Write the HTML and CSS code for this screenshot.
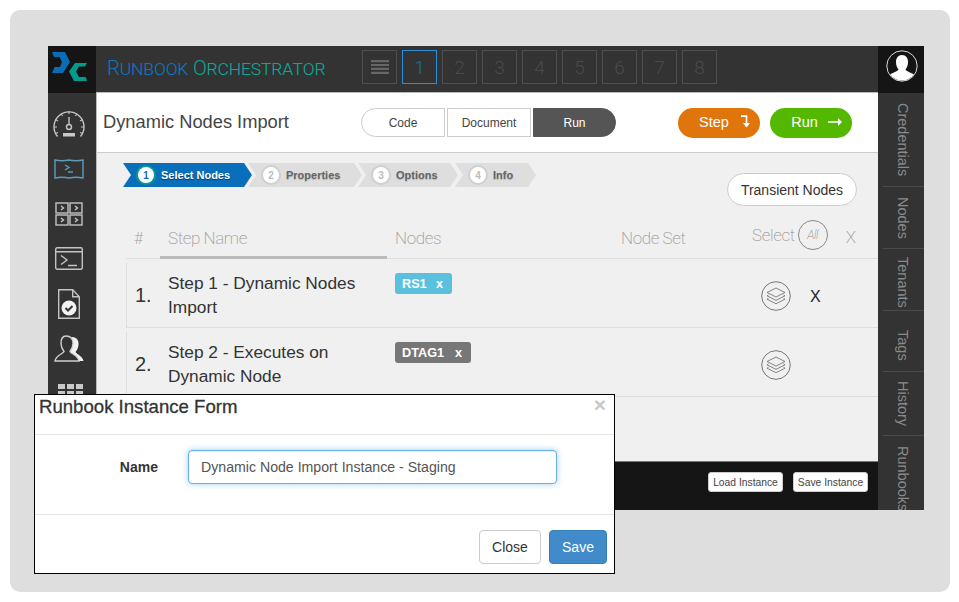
FILE: index.html
```html
<!DOCTYPE html>
<html lang="en">
<head>
<meta charset="utf-8">
<title>Runbook Orchestrator</title>
<link rel="stylesheet" href="styles.css">
</head>
<body>
<div class="frame">
  <div class="app">
    <aside class="rail">
      <div class="logo">
        <svg class="logo-svg" viewBox="0 0 47 46">
          <polygon class="logo-blue" points="4,6 17,6 22,16 15,27 4,27 6.5,21 12,21 14,16 11.5,11 6,11"/>
          <polygon class="logo-teal" points="39,17 27,17 21,25.500 26,35 39,35 37.700,31 31,31 28,25.500 31,20.500 37,20.500"/>
        </svg>
      </div>
      <nav class="rail-icons">
        <div class="rail-cell">
          <svg class="ico-gauge" viewBox="0 0 32 28">
            <path class="ln" d="M4.500 26.500A15 15 0 1 1 27.500 26.500"/>
            <path class="ln-thin" d="M16 1v3M8 3.500l1.500 2.500M24 3.500L22.500 6M2.500 9.500l2.500 1.500M29.500 9.500L27 11M1 17h3M31 17h-3M2.500 23.500l2.500-1M29.500 23.500l-2.500-1"/>
            <path class="ln" d="M16 7v7"/>
            <circle class="ln" cx="16" cy="17" r="2.500"/>
            <rect class="fill-soft" x="10" y="23" width="12" height="3.500"/>
          </svg>
        </div>
        <div class="rail-cell">
          <svg class="ico-book" viewBox="0 0 30 22">
            <path class="ln-blue" d="M1 2c5 1 9 1 14 0c5 1 9 1 14 0v18c-5-1-9-1-14 0c-5-1-9-1-14 0z"/>
            <path class="ln-blue" d="M11 7l4 2.500l-4 2.500M14 14h5"/>
          </svg>
        </div>
        <div class="rail-cell">
          <svg class="ico-panels" viewBox="0 0 28 24">
            <rect class="ln" x="1" y="1" width="12" height="10"/>
            <rect class="ln" x="15" y="1" width="12" height="10"/>
            <rect class="ln" x="1" y="13" width="12" height="10"/>
            <rect class="ln" x="15" y="13" width="12" height="10"/>
            <path class="ln" d="M6 4l2.500 2l-2.500 2M20 4l2.500 2l-2.500 2M6 16l2.500 2l-2.500 2M20 16l2.500 2l-2.500 2"/>
          </svg>
        </div>
        <div class="rail-cell">
          <svg class="ico-term" viewBox="0 0 28 23">
            <rect class="ln" x="0.700" y="0.700" width="26.600" height="21.600" rx="1.500"/>
            <path class="ln" d="M0.700 4.700h26.600M6 8.500l6 4.500l-6 4.500M13 18.500h9"/>
          </svg>
        </div>
        <div class="rail-cell">
          <svg class="ico-doc" viewBox="0 0 22 30">
            <path class="ln" d="M0.700 0.700h14l6.600 7v21.600h-20.600z"/>
            <path class="ln" d="M14.700 0.700v7h6.600"/>
            <circle class="fill-white" cx="11" cy="19" r="7.500"/>
            <path class="ln-dark" d="M7.500 19l2.500 2.500l4.500-4.500"/>
          </svg>
        </div>
        <div class="rail-cell">
          <svg class="ico-user" viewBox="0 0 30 27">
            <path class="fill-white" d="M18 2c5 0 7 4 6.500 8c-.3 3-1.500 5-3 7c2 3 7 4 8 9h-7c-1-3-4-4-6-6z"/>
            <path class="ln-fill" d="M12 1c4.500 0 7 3 7 7.500c0 3.500-1.500 6-3 8c1 2.500 8 3.500 9 9.500H1c1-6 8-7 9-9.500c-1.500-2-3-4.500-3-8C7 4 8.500 1 12 1z"/>
          </svg>
        </div>
        <div class="rail-cell">
          <svg class="ico-apps" viewBox="0 0 25 24">
            <rect class="fill-soft" x="0" y="0" width="7" height="5"/>
            <rect class="fill-soft" x="9" y="0" width="7" height="5"/>
            <rect class="fill-soft" x="18" y="0" width="7" height="5"/>
            <rect class="fill-soft" x="0" y="7" width="7" height="5"/>
            <rect class="fill-soft" x="9" y="7" width="7" height="5"/>
            <rect class="fill-soft" x="18" y="7" width="7" height="5"/>
          </svg>
        </div>
      </nav>
    </aside>

    <div class="center">
      <header class="topbar">
        <div class="brand"><span class="brand-blue">Runbook</span> <span class="brand-teal">Orchestrator</span></div>
        <div class="slots">
          <div class="slot">
            <svg class="ico-menu" viewBox="0 0 18 14"><path d="M0 0h18v2.200H0zM0 3.900h18v2.200H0zM0 7.800h18V10H0zM0 11.700h18v2.200H0z"/></svg>
          </div>
          <div class="slot slot-active">1</div>
          <div class="slot">2</div>
          <div class="slot">3</div>
          <div class="slot">4</div>
          <div class="slot">5</div>
          <div class="slot">6</div>
          <div class="slot">7</div>
          <div class="slot">8</div>
        </div>
      </header>

      <section class="titlebar">
        <h1 class="page-title">Dynamic Nodes Import</h1>
        <div class="segments">
          <button class="seg seg-first">Code</button>
          <button class="seg">Document</button>
          <button class="seg seg-last">Run</button>
        </div>
        <div class="actions">
          <button class="pill pill-step">Step
            <svg class="ico-step" viewBox="0 0 10 13"><path class="step-line" d="M1 1.200h5.500v8"/><path class="step-head" d="M3 8h7l-3.500 4.500z"/></svg>
          </button>
          <button class="pill pill-run">Run
            <svg class="ico-arrow" viewBox="0 0 14 8"><path d="M0 3.200h10V0l4 4l-4 4V4.800H0z"/></svg>
          </button>
        </div>
      </section>

      <main class="main">
        <div class="toolbar">
          <ol class="steps">
            <li class="step step-active"><span class="num">1</span>Select Nodes</li>
            <li class="step step-2"><span class="num">2</span>Properties</li>
            <li class="step step-3"><span class="num">3</span>Options</li>
            <li class="step step-4"><span class="num">4</span>Info</li>
          </ol>
          <button class="transient">Transient Nodes</button>
        </div>

        <div class="table">
          <div class="thead">
            <div class="th">#</div>
            <div class="th th-name">Step Name</div>
            <div class="th">Nodes</div>
            <div class="th">Node Set</div>
            <div class="th th-select">
              <span>Select</span>
              <span class="all">All</span>
              <span class="th-x">X</span>
            </div>
          </div>
          <div class="row">
            <div class="idx">1.</div>
            <div class="name">Step 1 - Dynamic Nodes Import</div>
            <div class="nodes"><span class="tag tag-blue">RS1<span class="tag-x">x</span></span></div>
            <div class="nodeset"></div>
            <div class="sel">
              <svg class="ico-layers" viewBox="0 0 30 30">
                <circle class="lay-c" cx="15" cy="15" r="14.300"/>
                <path class="lay" d="M15 7l9 4.500l-9 4.500l-9-4.500z"/>
                <path class="lay" d="M7.500 13.800L6 14.800l9 4.500l9-4.500l-1.500-1"/>
                <path class="lay" d="M7.500 17.200L6 18.200l9 4.500l9-4.500l-1.500-1"/>
              </svg>
              <span class="row-x">X</span>
            </div>
          </div>
          <div class="row">
            <div class="idx">2.</div>
            <div class="name">Step 2 - Executes on Dynamic Node</div>
            <div class="nodes"><span class="tag tag-gray">DTAG1<span class="tag-x">x</span></span></div>
            <div class="nodeset"></div>
            <div class="sel">
              <svg class="ico-layers" viewBox="0 0 30 30">
                <circle class="lay-c" cx="15" cy="15" r="14.300"/>
                <path class="lay" d="M15 7l9 4.500l-9 4.500l-9-4.500z"/>
                <path class="lay" d="M7.500 13.800L6 14.800l9 4.500l9-4.500l-1.500-1"/>
                <path class="lay" d="M7.500 17.200L6 18.200l9 4.500l9-4.500l-1.500-1"/>
              </svg>
            </div>
          </div>
        </div>
      </main>

      <footer class="footer">
        <button class="foot-btn">Load Instance</button>
        <button class="foot-btn">Save Instance</button>
      </footer>
    </div>

    <aside class="side">
      <div class="avatar">
        <svg class="ico-avatar" viewBox="0 0 32 32">
          <clipPath id="avatar-clip"><circle cx="16" cy="16" r="14.500"/></clipPath>
          <circle class="av-ring" cx="16" cy="16" r="15.200"/>
          <path class="av-bust" clip-path="url(#avatar-clip)" d="M16 5c4 0 6 3 6 7c0 3-1 5.500-2.500 7.500c.3 2 7 3 10 6.500v6H2.500v-6c3-3.500 9.700-4.500 10-6.500C11 17.500 10 15 10 12c0-4 2-7 6-7z"/>
        </svg>
      </div>
      <div class="tab tab-1"><span>Credentials</span></div>
      <div class="tab tab-2"><span>Nodes</span></div>
      <div class="tab tab-3"><span>Tenants</span></div>
      <div class="tab tab-4"><span>Tags</span></div>
      <div class="tab tab-5"><span>History</span></div>
      <div class="tab tab-6"><span>Runbooks</span></div>
    </aside>
  </div>
</div>

<div class="modal">
  <div class="modal-head">
    <h2 class="modal-title">Runbook Instance Form</h2>
    <span class="modal-close">×</span>
  </div>
  <div class="modal-body">
    <label class="modal-label" for="instance-name">Name</label>
    <input class="modal-input" id="instance-name" type="text" value="Dynamic Node Import Instance - Staging">
  </div>
  <div class="modal-foot">
    <button class="btn btn-close">Close</button>
    <button class="btn btn-save">Save</button>
  </div>
</div>
</body>
</html>
```
FILE: styles.css
```css
* { box-sizing: border-box; }
html, body { margin: 0; padding: 0; }
body {
  width: 959px;
  height: 602px;
  background: #fff;
  font-family: "Liberation Sans", Arial, sans-serif;
  color: #333;
  overflow: hidden;
  position: relative;
}
button { font-family: inherit; cursor: pointer; }

.frame {
  margin: 10px 9px 10px 10px;
  width: 940px;
  height: 582px;
  background: #dedede;
  border-radius: 10px;
  padding: 36px 26px 82px 38px;
}
.app {
  display: flex;
  width: 876px;
  height: 464px;
  background: #333;
}

/* left rail */
.rail { width: 48px; flex: none; background: #333; overflow: hidden; }
.logo { height: 47px; background: #151515; }
.logo-svg { display: block; width: 47px; height: 46px; }
.logo-blue { fill: #0a6cb4; }
.logo-teal { fill: #069a8c; }
.rail-icons { padding-top: 8px; height: 417px; overflow: hidden; }
.rail-cell {
  height: 45px;
  display: flex;
  align-items: center;
  justify-content: center;
  padding-right: 6px;
}
.ln { fill: none; stroke: #c4c4c4; stroke-width: 1.400; }
.ln-thin { fill: none; stroke: #c4c4c4; stroke-width: 1.100; }
.ln-blue { fill: none; stroke: #5d9cb8; stroke-width: 1.400; }
.ln-dark { fill: none; stroke: #333; stroke-width: 2; }
.ln-fill { fill: #333; stroke: #d0d0d0; stroke-width: 1.400; }
.fill-white { fill: #f2f2f2; }
.fill-soft { fill: #c8c8c8; }
.ico-gauge { width: 32px; height: 28px; }
.ico-book { width: 30px; height: 22px; }
.ico-panels { width: 28px; height: 24px; }
.ico-term { width: 28px; height: 23px; }
.ico-doc { width: 22px; height: 30px; }
.ico-user { width: 30px; height: 27px; }
.ico-apps { width: 25px; height: 24px; margin-top: 4px; margin-left: 2px; }

/* centre column */
.center { flex: 1; min-width: 0; display: flex; flex-direction: column; }
.topbar {
  height: 46px;
  flex: none;
  background: #333;
  display: flex;
  align-items: center;
  padding-left: 11px;
}
.brand {
  width: 255px;
  font-size: 20.400px;
  font-family: "Roboto", "Liberation Sans", sans-serif;
  font-weight: 300;
  font-variant: small-caps;
  white-space: nowrap;
  letter-spacing: -0.2px;
  margin-top: -2px;
}
.brand-blue { color: #0d74c0; }
.brand-teal { color: #0ba798; }
.slots { display: flex; gap: 5px; margin-top: -4px; }
.slot {
  width: 35px;
  height: 34px;
  border: 1px solid #4f4f4f;
  color: #4a4a4a;
  font-size: 19px;
  font-weight: 300;
  font-family: "Roboto", "Liberation Sans", sans-serif;
  display: flex;
  align-items: center;
  justify-content: center;
}
.slot-active { border-color: #2b8fd6; color: #1f6da6; }
.ico-menu { width: 18px; height: 14px; fill: #666; }

.titlebar {
  height: 61px;
  flex: none;
  background: #fff;
  border-bottom: 1px solid #ccc;
  border-top: 1px solid #bbb;
  border-left: 1px solid #bbb;
  display: flex;
  align-items: center;
  padding-left: 6px;
}
.page-title {
  margin: 0 0 1px;
  width: 258px;
  font-size: 18.300px;
  font-weight: 400;
  color: #444;
  white-space: nowrap;
}
.segments { display: flex; gap: 2px; }
.seg {
  width: 84px;
  height: 29px;
  padding: 0;
  background: #fff;
  border: 1px solid #ccc;
  font-size: 12px;
  color: #444;
}
.seg-first { border-radius: 15px 0 0 15px; }
.seg-last {
  width: 83px;
  background: #555;
  border-color: #555;
  color: #fff;
  border-radius: 0 15px 15px 0;
}
.actions { display: flex; gap: 10px; margin-left: 62px; }
.pill {
  width: 82px;
  height: 30px;
  padding: 0 0 2px 9px;
  border: 0;
  border-radius: 15px;
  color: #fff;
  font-size: 14.500px;
  display: flex;
  align-items: center;
  justify-content: center;
  gap: 11px;
}
.pill-step { background: #e0760b; padding-left: 11px; }
.pill-run { background: #55b800; padding-left: 11px; gap: 10px; }
.ico-step { width: 10px; height: 13px; }
.step-line { fill: none; stroke: #fff; stroke-width: 1.700; }
.step-head { fill: #fff; }
.ico-arrow { width: 14px; height: 8px; fill: #fff; }

/* main */
.main {
  flex: 1;
  min-height: 0;
  background: #f0f0f0;
  border-left: 1px solid #bbb;
  padding-top: 10px;
}
.toolbar {
  height: 57px;
  display: flex;
  justify-content: space-between;
  align-items: flex-start;
  padding: 0 21px 0 26px;
}
.steps { display: flex; list-style: none; margin: 0; padding: 0; }
.step {
  height: 24px;
  display: flex;
  align-items: center;
  font-size: 11px;
  font-weight: 700;
  color: #666;
  background: #dedede;
  text-shadow: 0 1px 1px rgba(0, 0, 0, 0.2);
  clip-path: polygon(0 0, calc(100% - 8px) 0, 100% 50%, calc(100% - 8px) 100%, 0 100%, 8px 50%);
  margin-left: -4px;
  padding-left: 15px;
}
.step-active {
  width: 129px;
  margin-left: 0;
  background: #0a6fbb;
  color: #fff;
  text-shadow: 0 1px 1px rgba(0, 0, 0, 0.5);
}
.step-2 { width: 114px; }
.step-3 { width: 100px; }
.step-4 { width: 81px; margin-left: -3px; }
.num {
  width: 16px;
  height: 16px;
  flex: none;
  border-radius: 50%;
  background: #fff;
  box-shadow: 0 0 0 2px #cfcfcf;
  color: #bbb;
  font-size: 10px;
  display: flex;
  align-items: center;
  justify-content: center;
  margin-right: 7px;
  text-shadow: none;
}
.step-active .num { color: #0a6fbb; box-shadow: 0 0 0 2px #069a8c; }
.transient {
  width: 130px;
  height: 33px;
  margin-top: 10px;
  padding: 0;
  background: #fff;
  border: 1px solid #ccc;
  border-radius: 17px;
  font-size: 14px;
  color: #333;
}

.table { margin-left: 29px; }
.thead, .row {
  display: grid;
  grid-template-columns: 42px 227px 226px 131px 1fr;
}
.thead {
  position: relative;
  height: 39px;
  border-bottom: 1px solid #ddd;
  align-items: center;
  font-family: "Roboto", "Liberation Sans", sans-serif;
  font-weight: 200;
  font-size: 17px;
  letter-spacing: -0.4px;
  color: #999;
  padding-bottom: 2px;
}
.th:first-child { padding-left: 8px; font-size: 16px; }
.thead::after {
  content: "";
  position: absolute;
  left: 34px;
  width: 227px;
  bottom: -1px;
  height: 3px;
  background: #bbb;
}
.th-select { display: flex; align-items: center; margin-top: -6px; }
.all {
  width: 30px;
  height: 30px;
  margin-left: 3px;
  border: 1px solid #888;
  border-radius: 50%;
  display: flex;
  align-items: center;
  justify-content: center;
  font-size: 12px;
  font-style: italic;
  color: #888;
}
.th-x { margin-left: 18px; margin-top: 3px; }

.row {
  height: 65px;
  margin-top: 4px;
  border-left: 1px solid #ddd;
  border-bottom: 1px solid #ddd;
  grid-template-columns: 41px 227px 226px 140px 1fr;
}
.idx { align-self: center; padding: 0 0 0 8px; font-size: 20px; color: #333; margin-top: 1px; }
.name { padding-top: 8px; font-size: 17.300px; line-height: 24px; color: #333; }
.nodes { padding-top: 10px; }
.tag {
  display: inline-flex;
  align-items: center;
  justify-content: space-between;
  height: 21px;
  padding: 0 9px 0 7px;
  border-radius: 3px;
  color: #fff;
  font-size: 12.700px;
  font-weight: 700;
}
.tag-blue { background: #5bc0de; width: 57px; }
.tag-gray { background: #777; width: 76px; }
.sel { display: flex; align-items: center; gap: 19px; padding-top: 2px; }
.ico-layers { width: 30px; height: 30px; flex: none; }
.lay-c { fill: none; stroke: #777; stroke-width: 1; }
.lay { fill: none; stroke: #777; stroke-width: 0.900; }
.row-x { font-size: 16px; color: #222; margin-top: 2px; }

.footer {
  height: 49px;
  flex: none;
  background: #151515;
  border-top: 1px solid #777;
  display: flex;
  justify-content: flex-end;
  align-items: center;
  gap: 10px;
  padding: 0 10px 8px 0;
}
.foot-btn {
  width: 75px;
  height: 20px;
  padding: 0;
  background: #fff;
  border: 1px solid #ccc;
  border-radius: 3px;
  font-size: 10.300px;
  color: #444;
}

/* right rail */
.side { width: 46px; flex: none; background: #333; overflow: hidden; }
.avatar {
  height: 47px;
  background: #151515;
  display: flex;
  align-items: center;
  justify-content: center;
}
.ico-avatar { width: 32px; height: 32px; margin: 0 0 8px 1px; }
.av-ring { fill: none; stroke: #d8d8d8; stroke-width: 1; }
.av-bust { fill: #fff; }
.tab {
  margin-left: 5px;
  border-bottom: 1px solid #4a4a4a;
  display: flex;
  justify-content: center;
  align-items: center;
  padding-right: 1px;
  color: #8a8a8a;
  font-size: 14.500px;
}
.tab span { writing-mode: vertical-rl; white-space: nowrap; }
.tab-1 { height: 94px; }
.tab-2 { height: 62px; }
.tab-3 { height: 62px; padding-top: 6px; }
.tab-4 { height: 61px; padding-top: 8px; }
.tab-5 { height: 64px; }
.tab-6 { height: 75px; border-bottom: 0; align-items: flex-start; padding-top: 10px; }

/* modal */
.modal {
  position: absolute;
  left: 34px;
  top: 394px;
  width: 581px;
  height: 180px;
  background: #fff;
  border: 1px solid #000;
  display: flex;
  flex-direction: column;
}
.modal-head {
  height: 40px;
  flex: none;
  border-bottom: 1px solid #e5e5e5;
  display: flex;
  justify-content: space-between;
  align-items: flex-start;
  padding: 2px 8px 0 4px;
}
.modal-title {
  margin: 0;
  font-size: 18.600px;
  line-height: 20px;
  font-weight: 400;
  -webkit-text-stroke: 0.3px #333;
  color: #333;
}
.modal-close { font-size: 21px; font-weight: 700; line-height: 16px; color: #c8c8c8; }
.modal-body {
  height: 80px;
  flex: none;
  border-bottom: 1px solid #e5e5e5;
  padding-top: 15px;
  display: grid;
  grid-template-columns: 123px 369px;
  column-gap: 30px;
  align-items: start;
}
.modal-label { font-size: 14px; font-weight: 700; text-align: right; line-height: 34px; color: #333; }
.modal-input {
  width: 369px;
  height: 34px;
  padding: 0 12px;
  border: 1px solid #66afe9;
  border-radius: 4px;
  outline: 0;
  box-shadow: inset 0 1px 1px rgba(0,0,0,.075), 0 0 6px rgba(102,175,233,.6);
  font-family: inherit;
  font-size: 14.150px;
  color: #555;
}
.modal-foot {
  flex: 1;
  display: flex;
  justify-content: flex-end;
  gap: 8px;
  padding: 15px 7px 0 0;
}
.btn {
  height: 34px;
  padding: 0;
  border-radius: 4px;
  font-size: 14px;
}
.btn-close { width: 62px; background: #fff; border: 1px solid #ccc; color: #333; }
.btn-save { width: 58px; background: #428bca; border: 1px solid #357ebd; color: #fff; }
```
